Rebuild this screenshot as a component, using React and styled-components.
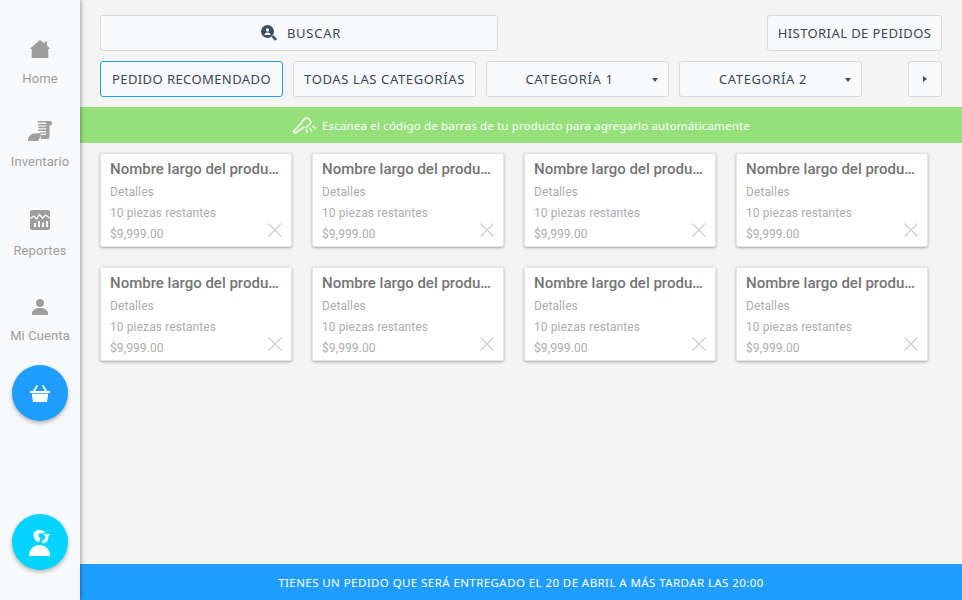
import React from 'react';
import styled, { createGlobalStyle } from 'styled-components';

const Global = createGlobalStyle`
  html, body { margin: 0; padding: 0; height: 100%; background: #f4f4f4; }
  #root { height: 100%; }
  * { box-sizing: border-box; }
`;

const Page = styled.div`
  width: 962px; height: 600px; display: flex; overflow: hidden; background: #f4f4f4;
  font-family: Roboto, sans-serif;
`;
const Sidebar = styled.aside`
  width: 80px; flex: none; height: 600px; background: #f8f9fb; display: flex; flex-direction: column; align-items: center;
  box-shadow: 1px 0 4px rgba(0,0,0,.35); position: relative; z-index: 2;
`;
const NavItem = styled.div`
  display: flex; flex-direction: column; align-items: center; height: ${p => p.$h}px; width: 80px;
`;
const NavIcon = styled.div`
  height: ${p => p.$h}px; margin-top: ${p => p.$top}px; display: flex; align-items: flex-start; justify-content: center;
  svg { display: block; }
`;
const NavLabel = styled.span`
  font-size: 13px; line-height: 15px; color: #9e9e9e; margin-top: 13px; letter-spacing: .1px; white-space: nowrap;
`;
const Fab = styled.button`
  width: 56px; height: 56px; border: 0; padding: 0; border-radius: 50%; background: ${p => p.$bg};
  box-shadow: 0 2px 4px rgba(0,0,0,.3); display: flex; align-items: center; justify-content: center; flex: none;
  margin-top: ${p => p.$top}px;
`;
const Main = styled.main`
  flex: 1; min-width: 0; display: flex; flex-direction: column; height: 600px;
`;
const Toolbar = styled.div`
  padding: 15px 20px 10px; display: flex; flex-direction: column; gap: 10px;
`;
const Row = styled.div`
  display: flex; align-items: center; gap: 10px;
`;
const Btn = styled.button`
  height: 36px; width: ${p => p.$w}px; flex: none; border: 1px solid ${p => (p.$active ? '#1f9eff' : '#d9d9d9')};
  border-radius: 3px; background: #f9fafc; color: #38465a; padding: 0 ${p => p.$pr || 0}px 0 ${p => p.$pl || 0}px;
  font-family: "Noto Sans", sans-serif; font-size: 13px; letter-spacing: ${p => p.$ls || 0.42}px; font-weight: 400;
  display: flex; align-items: center; justify-content: center; white-space: nowrap; position: relative;
  margin-left: ${p => p.$ml || 0}px;
`;
const SearchIcon = styled.svg`
  margin-right: 10px;
`;
const Caret = styled.span`
  position: absolute; right: 10px; top: 16px; width: 0; height: 0;
  border-left: 3.5px solid transparent; border-right: 3.5px solid transparent; border-top: 4px solid #3f4d60;
`;
const CaretRight = styled.span`
  width: 0; height: 0; border-top: 3.5px solid transparent; border-bottom: 3.5px solid transparent; border-left: 4px solid #3f4d60;
`;
const Banner = styled.div`
  height: 36px; flex: none; background: #96e07b; color: #fff; display: flex; align-items: center; justify-content: center;
  font-family: "Noto Sans", sans-serif; font-size: 11.5px; letter-spacing: .17px; gap: 6px;
`;
const Grid = styled.div`
  flex: 1; padding: 10px 0 0 20px; display: grid; grid-template-columns: repeat(4, 192px); column-gap: 20px; row-gap: 20px; align-content: start;
`;
const Card = styled.article`
  height: 94px; background: #fff; border-radius: 2px; border: 1px solid #e4e4e4; box-shadow: 0 1px 3px rgba(0,0,0,.32);
  padding: 6px 9px 0; position: relative; min-width: 0;
`;
const Title = styled.div`
  font-size: 15px; line-height: 18px; font-weight: 500; color: #757575; white-space: nowrap; overflow: hidden; text-overflow: ellipsis; letter-spacing: 0;
`;
const Meta = styled.div`
  font-size: 12px; line-height: 14px; color: #adadad; margin-top: 7px; letter-spacing: .1px;
  &:first-of-type { margin-top: 8px; }
`;
const Close = styled.svg`
  position: absolute; right: 9px; bottom: 9px;
`;
const Footer = styled.div`
  height: 36px; flex: none; background: #1f9eff; color: #fff; display: flex; align-items: center; justify-content: center;
  font-family: "Noto Sans", sans-serif; font-size: 11.5px; letter-spacing: .42px;
`;

const Home = () => (
  <svg width="20" height="18" viewBox="0 0 20 18" fill="#9e9e9e"><path d="M10 0 14.500 3.600V1.500H17V5.600L20 8.600 18.300 9.200V18H1.700V9.200L0 8.600Z"/></svg>
);
const Inventory = () => (
  <svg width="24" height="20" viewBox="0 0 24 20" fill="#9e9e9e">
    <path d="M10 0H22a2 2 0 0 1 2 2c0 1.600-1 2.600-2.500 2.600V16a2 2 0 0 1-2 2H13l-.5-3 .3-1h5.400v-1.300h-6V11.400h6V10h-8V8.600h8V7.200h-8V5.800h8V4.400h-8V2.900h8V1.600H9.400C9.400 .8 9.600 .3 10 0Z"/>
    <path d="M0 20c0-4 2-7 6-7.600l5.500-.2c1.200 0 1.600 1.400 1 2.500L11 18.500c-.5 1-1.300 1.500-2.500 1.500Z"/>
  </svg>
);
const Reports = () => (
  <svg width="20" height="20" viewBox="0 0 20 20">
    <rect width="20" height="20" rx="2" fill="#9e9e9e"/>
    <path d="M0 8.500 4 6l2.500 3 3-4.500 3 3.500 3-3L20 8" fill="none" stroke="#f8f9fb" strokeWidth="1.300"/>
    <path d="M4 13h2v4H4zM8 11h2v6H8zM12 12.500h2V17h-2zM16 11h2v6h-2z" fill="#f8f9fb"/>
  </svg>
);
const Person = () => (
  <svg width="16" height="16" viewBox="0 0 16 16" fill="#9e9e9e"><circle cx="8" cy="4" r="4"/><path d="M0 16v-1.500C0 11 3.500 9 8 9s8 2 8 5.500V16Z"/></svg>
);
const Basket = () => (
  <svg width="20" height="17" viewBox="0 0 20 17" fill="#fff">
    <path d="M0 6H20V8H0ZM1.800 8.800H18.200L17 17H3Z"/>
    <path d="M3 6 6.500 0 8 .8 5 6ZM17 6 13.500 0 12 .8 15 6Z"/>
  </svg>
);
const Support = () => (
  <svg width="22" height="27" viewBox="0 0 22 27" fill="#fff">
    <path d="M0 27c0-6.500 4.500-11 10.500-11S21 20.500 21 27Z"/>
    <path d="M4.500 5.500C4.500 2.500 7.500 1 10.500 1c2.500 0 4.500 1 6 3l-4.500.5-1-1L9 7l2.500 2.500-1.500 3.500C7 13 4.500 9.500 4.500 5.500Z"/>
    <path d="M14.500 5H21L19.300 7.500C20 10.500 18 13.500 14 14.500L12.500 12c2.500-.7 4.200-2.300 4-4.200Z"/>
  </svg>
);
const Search = () => (
  <SearchIcon width="16" height="16" viewBox="0 0 16 16" fill="#3f4d60">
    <path fillRule="evenodd" d="M6.500 0a6.500 6.500 0 1 1 0 13 6.500 6.500 0 0 1 0-13Z"/>
    <circle cx="6.500" cy="5" r="1.700" fill="#f9fafc"/>
    <path d="M3.500 10c0-1.500 1.300-2.500 3-2.500s3 1 3 2.500Z" fill="#f9fafc"/>
    <path d="m10.500 12 1.800-1.800 3.200 3.200a1.300 1.300 0 0 1-1.800 1.800Z"/>
  </SearchIcon>
);
const Scanner = () => (
  <svg width="24" height="17" viewBox="0 0 24 17" fill="none" stroke="#eef8e8" strokeWidth="1.800" strokeLinecap="round">
    <path d="M1.500 14.500 9 6.500M3.500 16 12 10"/>
    <path d="M9.500 5 13 1.500c1-.8 2.300-.8 3.200 0l2 2c.8 1 .8 2.200 0 3L14 10.500" strokeWidth="1.700"/>
    <path d="M1.500 14.500l2 1.500"/>
    <path d="M14.500 13l.5 2.500M18 11.500l1.500 2.500M21 9.500l2.500 1.500" strokeWidth="1.600"/>
  </svg>
);

const nav = [
  { label: 'Home', Icon: Home, h: 100, top: 40, ih: 18 },
  { label: 'Inventario', Icon: Inventory, h: 90, top: 21, ih: 20 },
  { label: 'Reportes', Icon: Reports, h: 90, top: 20, ih: 20 },
  { label: 'Mi Cuenta', Icon: Person, h: 85, top: 19, ih: 16 },
];

export default function App() {
  return (
    <Page>
      <Global />
      <Sidebar>
        {nav.map(({ label, Icon, h, top, ih }) => (
          <NavItem key={label} $h={h}>
            <NavIcon $top={top} $h={ih}><Icon /></NavIcon>
            <NavLabel>{label}</NavLabel>
          </NavItem>
        ))}
        <Fab $bg="#1f9eff" $top={0}><Basket /></Fab>
        <Fab $bg="#00d4ff" $top={93}><Support /></Fab>
      </Sidebar>
      <Main>
        <Toolbar>
          <Row>
            <Btn $w={398} $ls={0.75} $pl={4}><Search />BUSCAR</Btn>
            <Btn $w={175} $ml={259}>HISTORIAL DE PEDIDOS</Btn>
          </Row>
          <Row>
            <Btn $w={183} $active>PEDIDO RECOMENDADO</Btn>
            <Btn $w={183} $ls={0.62}>TODAS LAS CATEGORÍAS</Btn>
            <Btn $w={183} $pr={16} $ls={0.6}>CATEGORÍA 1<Caret /></Btn>
            <Btn $w={183} $pr={15} $ls={0.6}>CATEGORÍA 2<Caret /></Btn>
            <Btn $w={34} $ml={36}><CaretRight /></Btn>
          </Row>
        </Toolbar>
        <Banner><Scanner />Escanea el código de barras de tu producto para agregarlo automáticamente</Banner>
        <Grid>
          {Array.from({ length: 8 }, (_, i) => (
            <Card key={i}>
              <Title>Nombre largo del producto</Title>
              <Meta>Detalles</Meta>
              <Meta>10 piezas restantes</Meta>
              <Meta>$9,999.00</Meta>
              <Close width="14" height="14" viewBox="0 0 14 14" stroke="#d4d4d4" strokeWidth="1.500"><path d="M.5.500l13 13M13.500.500l-13 13"/></Close>
            </Card>
          ))}
        </Grid>
        <Footer>TIENES UN PEDIDO QUE SERÁ ENTREGADO EL 20 DE ABRIL A MÁS TARDAR LAS 20:00</Footer>
      </Main>
    </Page>
  );
}
